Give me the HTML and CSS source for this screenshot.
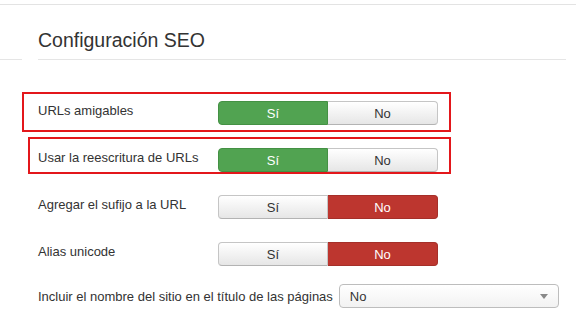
FILE: index.html
```html
<!DOCTYPE html>
<html lang="es">
<head>
    <meta charset="UTF-8">
    <meta name="viewport" content="width=device-width, initial-scale=1.0">
    <title>Configuración SEO</title>
    <link rel="stylesheet" href="styles.css">
</head>
<body>
    <div class="topline"></div>

    <div class="header">
        <div class="tab-edge"></div>
        <div class="legend">
            <h2>Configuración SEO</h2>
        </div>
    </div>

    <form class="settings" onsubmit="return false;">
        <div class="row marked first">
            <label class="row-label">URLs amigables</label>
            <div class="switch">
                <button type="button" class="opt yes active">Sí</button>
                <button type="button" class="opt no">No</button>
            </div>
        </div>

        <div class="row marked second">
            <label class="row-label">Usar la reescritura de URLs</label>
            <div class="switch">
                <button type="button" class="opt yes active">Sí</button>
                <button type="button" class="opt no">No</button>
            </div>
        </div>

        <div class="row">
            <label class="row-label">Agregar el sufijo a la URL</label>
            <div class="switch">
                <button type="button" class="opt yes">Sí</button>
                <button type="button" class="opt no active">No</button>
            </div>
        </div>

        <div class="row">
            <label class="row-label">Alias unicode</label>
            <div class="switch">
                <button type="button" class="opt yes">Sí</button>
                <button type="button" class="opt no active">No</button>
            </div>
        </div>

        <div class="row inline">
            <label class="inline-label" for="sitename">Incluir el nombre del sitio en el título de las páginas</label>
            <div class="select" id="sitename">
                <span>No</span>
                <span class="caret"></span>
            </div>
        </div>
    </form>
</body>
</html>
```

FILE: styles.css
```css
body {
    margin: 0;
    font-family: "Liberation Sans", Arial, sans-serif;
    font-size: 13px;
    color: #333;
    background: #fff;
}

.topline {
    height: 4px;
    border-bottom: 1px solid #e3e3e3;
}

.header {
    display: flex;
}
.tab-edge {
    width: 22px;
    border-bottom: 1px solid #e5e5e5;
}
.legend {
    margin-left: 16px;
    width: 528px;
    border-bottom: 1px solid #e5e5e5;
}
.legend h2 {
    margin: 0;
    padding: 23px 0 7px;
    font-size: 19.5px;
    line-height: 24px;
    font-weight: normal;
    color: #333;
}

.settings {
    display: flex;
    flex-direction: column;
    gap: 18px;
    padding: 36px 0 0 38px;
}

.row {
    position: relative;
    display: flex;
    align-items: flex-start;
    padding-top: 5px;
}
.row-label {
    width: 180px;
    line-height: 19px;
}

/* red annotation boxes */
.marked::after {
    content: "";
    position: absolute;
    box-sizing: border-box;
    border: 2px solid #e3171b;
    pointer-events: none;
}
.first::after {
    left: -16px;
    top: -4px;
    width: 429px;
    height: 40px;
}
.second::after {
    left: -10px;
    top: -6px;
    width: 423px;
    height: 37px;
}

.switch {
    display: flex;
}
.opt {
    width: 110px;
    height: 24px;
    margin: 0;
    padding: 2px 0 0;
    font-family: inherit;
    font-size: 13px;
    line-height: 20px;
    color: #333;
    background: linear-gradient(#ffffff, #e6e6e6);
    border: 1px solid #c5c5c5;
    border-bottom-color: #b3b3b3;
    cursor: pointer;
}
.opt.yes {
    border-radius: 4px 0 0 4px;
}
.opt.no {
    border-left: none;
    border-radius: 0 4px 4px 0;
}
.opt.yes.active {
    color: #fff;
    background: #51a351;
    border-color: #449144;
}
.opt.no.active {
    color: #fff;
    background: #bd362f;
    border-color: #a52f29;
}

.inline {
    align-items: center;
    padding-top: 0;
}
.inline-label {
    margin-right: 6px;
}
.select {
    box-sizing: border-box;
    width: 220px;
    height: 24px;
    padding: 0 10px;
    display: flex;
    align-items: center;
    justify-content: space-between;
    background: linear-gradient(#ffffff, #f2f2f2);
    border: 1px solid #bdbdbd;
    border-radius: 4px;
}
.caret {
    width: 0;
    height: 0;
    border-left: 4px solid transparent;
    border-right: 4px solid transparent;
    border-top: 5px solid #888;
}
```
